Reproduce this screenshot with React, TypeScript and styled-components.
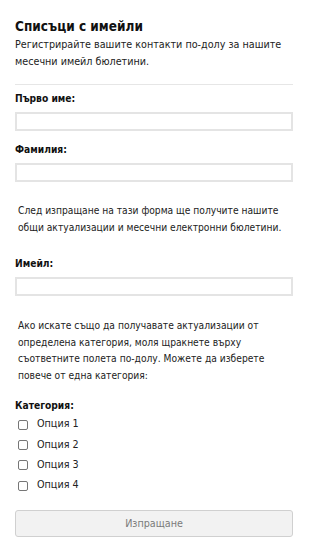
import styled, { createGlobalStyle } from 'styled-components';

const GlobalStyle = createGlobalStyle`
  * {
    box-sizing: border-box;
  }
  body {
    margin: 0;
    background: #fff;
    font-family: 'DejaVu Sans Condensed', 'DejaVu Sans', Verdana, sans-serif;
    color: #222;
  }
`;

const Page = styled.form`
  width: 310px;
  padding: 17px 17px 0 15px;
  font-size: 10.7px;
  line-height: 17px;
`;

const Title = styled.h2`
  margin: 0;
  font-size: 13.5px;
  line-height: 18px;
  font-weight: bold;
  color: #111;
`;

const Intro = styled.p`
  margin: 1px 0 0;
  line-height: 17px;
`;

const Divider = styled.hr`
  border: 0;
  border-top: 1px solid #e6e6e6;
  margin: 14px 0 5px;
`;

const Field = styled.div<{ $gap?: number }>`
  display: flex;
  flex-direction: column;
  gap: 5px;
  margin-top: ${(p) => p.$gap ?? 0}px;
`;

const Label = styled.label`
  font-size: 10.2px;
  font-weight: bold;
  color: #111;
`;

const TextInput = styled.input`
  width: 100%;
  height: 19px;
  border: 2px solid #e4e4e4;
  background: #fff;
  padding: 0 4px;
  font: inherit;
  outline: none;
`;

const Note = styled.p<{ $top: number }>`
  margin: ${(p) => p.$top}px 0 0;
  padding: 0 4px 0 3px;
  font-size: 10.2px;
  line-height: 16.6px;
`;

const Options = styled.div`
  display: flex;
  flex-direction: column;
  padding-left: 3px;
`;

const Option = styled.label`
  display: flex;
  align-items: center;
  height: 20.3px;
  gap: 9px;
`;

const Box = styled.span`
  width: 10px;
  height: 10px;
  margin-top: 2px;
  border: 1px solid #767676;
  border-radius: 2px;
  background: #fff;
`;

const Submit = styled.button`
  display: block;
  width: 100%;
  height: 27px;
  margin-top: 15px;
  border: 1px solid #d0d0d0;
  border-radius: 3px;
  background: #f2f2f2;
  color: #7a7a7a;
  font: inherit;
`;

const options = ['Опция 1', 'Опция 2', 'Опция 3', 'Опция 4'];

function App() {
  return (
    <>
      <GlobalStyle />
      <Page onSubmit={(e) => e.preventDefault()}>
        <Title>Списъци с имейли</Title>
        <Intro>Регистрирайте вашите контакти по-долу за нашите месечни имейл бюлетини.</Intro>
        <Divider />
        <Field>
          <Label>Първо име:</Label>
          <TextInput type="text" />
        </Field>
        <Field $gap={10}>
          <Label>Фамилия:</Label>
          <TextInput type="text" />
        </Field>
        <Note $top={21}>
          След изпращане на тази форма ще получите нашите общи актуализации и месечни електронни бюлетини.
        </Note>
        <Field $gap={19}>
          <Label>Имейл:</Label>
          <TextInput type="email" />
        </Field>
        <Note $top={22}>
          Ако искате също да получавате актуализации от определена категория, моля щракнете върху
          съответните полета по-долу. Можете да изберете повече от една категория:
        </Note>
        <Field $gap={12}>
          <Label>Категория:</Label>
        </Field>
        <Options>
          {options.map((o) => (
            <Option key={o}>
              <Box />
              {o}
            </Option>
          ))}
        </Options>
        <Submit type="submit">Изпращане</Submit>
      </Page>
    </>
  );
}

export default App;
